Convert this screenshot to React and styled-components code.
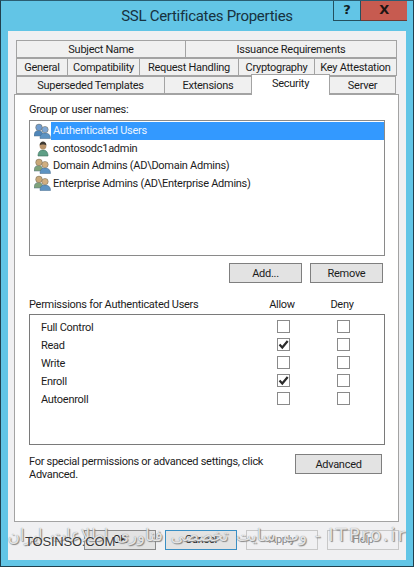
import styled, { createGlobalStyle } from 'styled-components';

const GlobalStyle = createGlobalStyle`
  html, body { margin: 0; padding: 0; background: #62c5e6; }
  body { font-family: "Roboto", "Liberation Sans", sans-serif; font-size: 11px; letter-spacing: -0.28px; color: #1c1c1c; }
`;

const tabRows = [
  [
    { label: 'Subject Name', w: 169 },
    { label: 'Issuance Requirements', w: 212 },
  ],
  [
    { label: 'General', w: 51 },
    { label: 'Compatibility', w: 72 },
    { label: 'Request Handling', w: 99 },
    { label: 'Cryptography', w: 76 },
    { label: 'Key Attestation', w: 83 },
  ],
  [
    { label: 'Superseded Templates', w: 148 },
    { label: 'Extensions', w: 87 },
    { label: 'Security', w: 79, active: true },
    { label: 'Server', w: 67 },
  ],
];

const users = [
  { name: 'Authenticated Users', icon: 'auth', selected: true },
  { name: 'contosodc1admin', icon: 'single' },
  { name: 'Domain Admins (AD\\Domain Admins)', icon: 'group' },
  { name: 'Enterprise Admins (AD\\Enterprise Admins)', icon: 'group' },
];

const permissions = [
  { name: 'Full Control' },
  { name: 'Read', allow: true },
  { name: 'Write' },
  { name: 'Enroll', allow: true },
  { name: 'Autoenroll' },
];

const UserIcon = ({ kind }) => {
  if (kind === 'single') {
    return (
      <svg width="17" height="17" viewBox="-1 0 17 17">
        <path d="M3 16c0-4 2-6 5-6s5 2 5 6z" fill="#5f9f86" stroke="#3d6f5c" strokeWidth=".6" />
        <circle cx="8" cy="6" r="3.4" fill="#b8946c" />
        <path d="M4.600 5.400C4.800 2.800 6.200 1.600 8 1.600s3.200 1.200 3.400 3.800C10 4.200 6 4.200 4.600 5.400z" fill="#3e3a33" />
      </svg>
    );
  }
  const back = kind === 'auth' ? '#6f9ccf' : '#c9a878';
  const front = kind === 'auth' ? '#7fa8d6' : '#d0ae80';
  const backBody = kind === 'auth' ? '#4f86b8' : '#7fa27a';
  return (
    <svg width="17" height="16" viewBox="0 0 17 16">
      <path d="M0 13c0-4 2-5.500 4.500-5.500S9 9 9 13z" fill={backBody} stroke="#52708a" strokeWidth=".5" />
      <circle cx="5" cy="4.400" r="3.300" fill={back} stroke="#6e6a58" strokeWidth=".5" />
      <path d="M6 15.500c0-4 2-5.500 5-5.500s5.500 1.500 5.500 5.500z" fill="#5d93c2" stroke="#44688c" strokeWidth=".5" />
      <circle cx="11" cy="6.600" r="3.200" fill={front} stroke="#6e6a58" strokeWidth=".5" />
    </svg>
  );
};

const CheckMark = () => (
  <svg width="11" height="11" viewBox="0 0 11 11">
    <path d="M1.500 5.500l2.800 3L9.700 2" fill="none" stroke="#2b2b2b" strokeWidth="2.200" />
  </svg>
);

export default function App() {
  return (
    <>
      <GlobalStyle />
      <Window>
        <TitleBar>
          <Title>SSL Certificates Properties</Title>
          <Controls>
            <HelpButton>?</HelpButton>
            <CloseButton>X</CloseButton>
          </Controls>
        </TitleBar>
        <Body>
          <TabStrip>
            {tabRows.map((row, i) => (
              <TabRow key={i}>
                {row.map((tab) => (
                  <Tab key={tab.label} $w={tab.w} $active={tab.active}>{tab.label}</Tab>
                ))}
              </TabRow>
            ))}
          </TabStrip>
          <Panel>
            <GroupLabel>Group or user names:</GroupLabel>
            <UserList>
              {users.map((u) => (
                <UserRow key={u.name}>
                  <UserIcon kind={u.icon} />
                  <UserName $selected={u.selected}>{u.name}</UserName>
                </UserRow>
              ))}
            </UserList>
            <ButtonRow>
              <Button $w={73}>Add...</Button>
              <Button $w={73}>Remove</Button>
            </ButtonRow>
            <PermHeader>
              <PermTitle>Permissions for Authenticated Users</PermTitle>
              <PermCol>Allow</PermCol>
              <PermCol>Deny</PermCol>
            </PermHeader>
            <PermList>
              {permissions.map((p) => (
                <PermRow key={p.name}>
                  <PermName>{p.name}</PermName>
                  <CheckCell><Check>{p.allow && <CheckMark />}</Check></CheckCell>
                  <CheckCell><Check /></CheckCell>
                </PermRow>
              ))}
            </PermList>
            <AdvancedRow>
              <AdvancedText>For special permissions or advanced settings, click Advanced.</AdvancedText>
              <Button $w={87}>Advanced</Button>
            </AdvancedRow>
          </Panel>
          <Footer>
            <FooterButton>OK</FooterButton>
            <FooterButton $focused>Cancel</FooterButton>
            <FooterButton $muted>Apply</FooterButton>
            <FooterButton $muted>Help</FooterButton>
          </Footer>
          <Watermark dir="rtl"><BrandMark>ITPro.ir</BrandMark> - وب سایت تخصصی فناوری اطلاعات ایران</Watermark>
          <SiteMark>TOSINSO.COM</SiteMark>
        </Body>
      </Window>
    </>
  );
}

const Window = styled.div`
  width: 414px;
  height: 567px;
  box-sizing: border-box;
  background: #62c5e6;
  border: 1px solid #20404e;
  border-top-color: #2a5d72;
  display: flex;
  flex-direction: column;
  overflow: hidden;
`;

const TitleBar = styled.div`
  height: 30px;
  flex: none;
  display: grid;
  grid-template-columns: 1fr auto;
`;

const Title = styled.div`
  padding: 5px 0 0 80px;
  text-align: center;
  font-size: 15px;
  letter-spacing: -0.3px;
  line-height: 20px;
  color: #17323f;
`;

const Controls = styled.div`
  display: flex;
  height: 21px;
  margin-right: 6px;
  margin-top: -1px;
`;

const HelpButton = styled.div`
  width: 28px;
  border: 1px solid #23505f;
  border-top: 0;
  box-sizing: border-box;
  text-align: center;
  font: bold 13px/19px "DejaVu Sans", sans-serif;
  color: #111d22;
`;

const CloseButton = styled.div`
  width: 46px;
  background: #c75b50;
  border-bottom: 1px solid #6c3a34;
  box-sizing: border-box;
  text-align: center;
  font: bold 13px/20px "DejaVu Sans", sans-serif;
  color: #1c1513;
`;

const Body = styled.div`
  position: relative;
  margin: 0 7px;
  height: 529px;
  flex: none;
  background: #f0f0f2;
  padding: 9px 7px 0 6px;
  box-sizing: border-box;
`;

const TabStrip = styled.div`
  padding-left: 2px;
  display: flex;
  flex-direction: column;
`;

const TabRow = styled.div`
  display: flex;
  height: 18px;
`;

const Tab = styled.div`
  width: ${(p) => p.$w}px;
  box-sizing: border-box;
  border: 1px solid #a3a3a3;
  border-right-width: 0;
  &:last-child { border-right-width: 1px; }
  background: ${(p) => (p.$active ? '#fff' : '#f0f0f0')};
  text-align: center;
  line-height: 18px;
  white-space: nowrap;
  ${(p) => p.$active && `
    position: relative;
    z-index: 2;
    height: 21px;
    margin-top: -2px;
    border-bottom: 0;
    border-right-width: 1px;
    margin-right: -1px;
  `}
`;

const Panel = styled.div`
  height: 428px;
  box-sizing: border-box;
  background: #fff;
  border: 1px solid #a3a3a3;
  padding: 7px 13px 0 14px;
`;

const GroupLabel = styled.div`
  line-height: 16px;
  height: 18px;
`;

const UserList = styled.div`
  height: 136px;
  box-sizing: border-box;
  border: 1px solid #8a8a8a;
  padding: 1px 0 0 4px;
  display: flex;
  flex-direction: column;
`;

const UserRow = styled.div`
  display: flex;
  align-items: center;
  height: 17.5px;
`;

const UserName = styled.div`
  flex: 1;
  line-height: 17.5px;
  padding-left: 2px;
  ${(p) => p.$selected && 'background: #3399ff; color: #e9f3ff;'}
`;

const ButtonRow = styled.div`
  display: flex;
  justify-content: flex-end;
  gap: 8px;
  padding-right: 2px;
  margin-top: 7px;
`;

const Button = styled.div`
  width: ${(p) => p.$w}px;
  height: 20px;
  box-sizing: border-box;
  background: #e3e3e3;
  border: 1px solid #7f7f7f;
  text-align: center;
  line-height: 19px;
`;

const PermHeader = styled.div`
  display: flex;
  margin-top: 14px;
  height: 17px;
  line-height: 16px;
`;

const PermTitle = styled.div`
  width: 223px;
`;

const PermCol = styled.div`
  width: 60px;
  text-align: center;
`;

const PermList = styled.div`
  height: 131px;
  box-sizing: border-box;
  border: 1px solid #7a7a7a;
  padding: 2px 0 0 11px;
  display: flex;
  flex-direction: column;
`;

const PermRow = styled.div`
  display: flex;
  align-items: center;
  height: 18px;
`;

const PermName = styled.div`
  width: 212px;
  padding-top: 2px;
`;

const CheckCell = styled.div`
  width: 60px;
  display: flex;
  justify-content: center;
`;

const Check = styled.div`
  width: 13px;
  height: 13px;
  box-sizing: border-box;
  border: 1px solid #8a8a8a;
  background: #fff;
  display: flex;
  align-items: center;
  justify-content: center;
`;

const AdvancedRow = styled.div`
  display: flex;
  align-items: flex-start;
  justify-content: space-between;
  margin-top: 9px;
  padding-right: 3px;
`;

const AdvancedText = styled.div`
  width: 245px;
  line-height: 13px;
  padding-top: 1px;
`;

const Footer = styled.div`
  display: flex;
  justify-content: flex-end;
  gap: 9px;
  margin-top: 8px;
`;

const FooterButton = styled.div`
  width: 72px;
  height: 20px;
  box-sizing: border-box;
  text-align: center;
  line-height: 18px;
  background: ${(p) => (p.$muted ? '#f0f0f2' : '#e3e3e3')};
  border: 1px solid ${(p) => (p.$focused ? '#3a8fc4' : p.$muted ? '#c8c8c8' : '#8a8a8a')};
  color: ${(p) => (p.$muted ? '#8a8a8a' : '#1c1c1c')};
`;

const Watermark = styled.div`
  position: absolute;
  left: -6px;
  right: -1px;
  top: 490px;
  font: 16.5px/28px "DejaVu Sans", sans-serif;
  letter-spacing: 0;
  word-spacing: 2.5px;
  white-space: nowrap;
  color: rgba(255, 255, 255, 0.8);
  text-shadow: 0 0 1px #777, 1px 1px 1px #888;
`;

const BrandMark = styled.span`
  font-size: 18px;
  letter-spacing: 2px;
`;

const SiteMark = styled.div`
  position: absolute;
  left: 17px;
  top: 501px;
  font: 13px/20px "Liberation Sans", sans-serif;
  letter-spacing: -0.2px;
  color: #3a3a3a;
  text-shadow: 0 0 2px #fff;
`;
